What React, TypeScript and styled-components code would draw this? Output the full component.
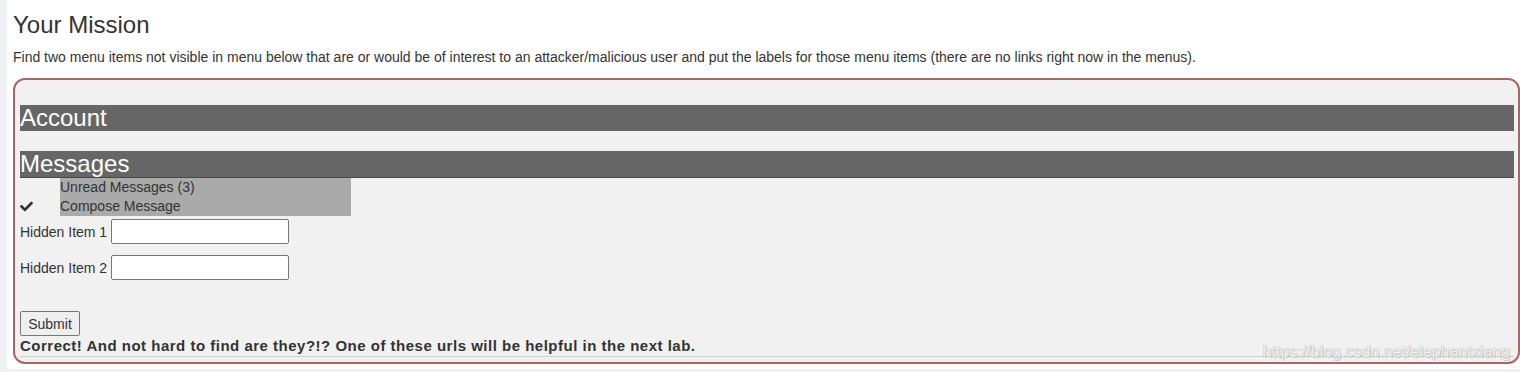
import React from 'react';
import styled, { createGlobalStyle } from 'styled-components';
import { FaCheck } from 'react-icons/fa';

const GlobalStyle = createGlobalStyle`
  html, body {
    margin: 0;
    padding: 0;
    background: #f0f1f5;
  }
  body {
    font-family: "Liberation Sans", Arial, sans-serif;
    color: #333;
  }
`;

const Page = styled.div`
  padding-left: 7px;
  height: 372px;
  box-sizing: border-box;
`;

const Panel = styled.div`
  background: #fff;
  height: 369px;
  padding: 12px 0 0 6px;
  box-sizing: border-box;
  border-bottom-left-radius: 4px;
`;

const Title = styled.h3`
  margin: 0;
  font-size: 24px;
  font-weight: 400;
  line-height: 26px;
  color: #333;
`;

const Intro = styled.p`
  margin: 10px 0 11px;
  font-size: 14px;
  line-height: 19px;
  color: #333;
`;

const AttackContainer = styled.div`
  position: relative;
  border: 2px solid #aa6666;
  border-radius: 12px;
  background: #f1f1f1;
  padding: 25px 4px 5px 5px;
`;

const MenuHeader = styled.div<{ $open?: boolean }>`
  background: #666;
  color: #fff;
  font-size: 24px;
  line-height: 26px;
  height: 26px;
  margin-bottom: ${(p) => (p.$open ? '0' : '20px')};
  border-bottom: ${(p) => (p.$open ? '1px solid #474747' : 'none')};
`;

const SubRow = styled.div`
  display: flex;
  align-items: flex-end;
`;

const CheckCell = styled.div`
  width: 40px;
  height: 19px;
  display: flex;
  align-items: center;
  color: #333;
  font-size: 13px;
`;

const SubMenu = styled.ul`
  list-style: none;
  margin: 0;
  padding: 0;
  width: 291px;
  background: #aaa;
`;

const SubItem = styled.li`
  font-size: 14px;
  line-height: 19px;
  color: #333;
`;

const Field = styled.div<{ $first?: boolean }>`
  display: flex;
  align-items: center;
  gap: 4px;
  margin-top: ${(p) => (p.$first ? '3px' : '11px')};
  font-size: 14px;
`;

const TextInput = styled.input`
  width: 178px;
  height: 25px;
  box-sizing: border-box;
  border: 1px solid #767676;
  border-radius: 2px;
  background: #fff;
  padding: 1px 2px;
  font-family: inherit;
`;

const SubmitButton = styled.button`
  margin-top: 31px;
  display: block;
  width: 60px;
  height: 25px;
  box-sizing: border-box;
  border: 1px solid #767676;
  border-radius: 2px;
  background: #efefef;
  color: #333;
  font-family: "Liberation Sans", Arial, sans-serif;
  font-size: 14px;
  padding: 0;
`;

const Feedback = styled.div`
  font-weight: 700;
  font-size: 15px;
  line-height: 20px;
  color: #333;
  letter-spacing: 0.5px;
`;

const Rule = styled.hr`
  margin: 0;
  border: 0;
  border-top: 1px solid #cfcfcf;
`;

const Watermark = styled.span`
  position: absolute;
  right: 8px;
  bottom: 1px;
  font-size: 16px;
  color: rgba(255, 255, 255, 0.9);
  text-shadow: 0 0 1px rgba(0, 0, 0, 0.35), 1px 1px 1px rgba(0, 0, 0, 0.15);
`;

export default function App() {
  return (
    <>
      <GlobalStyle />
      <Page>
        <Panel>
          <Title>Your Mission</Title>
          <Intro>
            Find two menu items not visible in menu below that are or would be of interest to an
            attacker/malicious user and put the labels for those menu items (there are no links
            right now in the menus).
          </Intro>
          <AttackContainer>
            <MenuHeader>Account</MenuHeader>
            <MenuHeader $open>Messages</MenuHeader>
            <SubRow>
              <CheckCell>
                <FaCheck />
              </CheckCell>
              <SubMenu>
                <SubItem>Unread Messages (3)</SubItem>
                <SubItem>Compose Message</SubItem>
              </SubMenu>
            </SubRow>
            <Field $first>
              <span>Hidden Item 1</span>
              <TextInput type="text" />
            </Field>
            <Field>
              <span>Hidden Item 2</span>
              <TextInput type="text" />
            </Field>
            <SubmitButton type="button">Submit</SubmitButton>
            <Feedback>
              Correct! And not hard to find are they?!? One of these urls will be helpful in the
              next lab.
            </Feedback>
            <Rule />
            <Watermark>https://blog.csdn.net/elephantxiang</Watermark>
          </AttackContainer>
        </Panel>
      </Page>
    </>
  );
}
